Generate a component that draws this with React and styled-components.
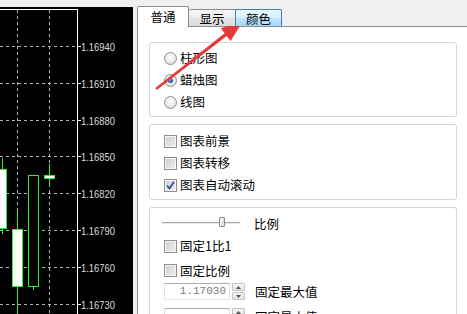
import React from "react";
import styled, { createGlobalStyle } from "styled-components";

const GlobalStyle = createGlobalStyle`
  html, body { margin: 0; padding: 0; background: #f0f0f0; overflow: hidden; }
  body {
    font-family: "Noto Sans CJK SC", "Microsoft YaHei", sans-serif;
    font-size: 12px;
    color: #000;
  }
`;

const Page = styled.div`
  position: relative;
  display: flex;
  width: 467px;
  height: 314px;
  overflow: hidden;
  background: #f0f0f0;
`;

const ChartPane = styled.div`
  flex: 0 0 133px;
  margin-top: 7px;
  background: #000;
  svg { display: block; }
`;

const Dialog = styled.div`
  flex: 1;
  min-width: 0;
  margin-left: 4px;
  display: flex;
  flex-direction: column;
`;

const TabBar = styled.div`
  position: relative;
  z-index: 1;
  flex-shrink: 0;
  display: flex;
  align-items: flex-end;
  height: 26px;
`;

const Tab = styled.div`
  box-sizing: border-box;
  display: flex;
  align-items: center;
  justify-content: center;
  width: ${(p) => p.$w}px;
  height: ${(p) => (p.$active ? 21 : 17)}px;
  margin-bottom: ${(p) => (p.$active ? -1 : 0)}px;
  margin-left: ${(p) => (p.$overlap ? -1 : 0)}px;
  padding-top: ${(p) => (p.$active ? 0 : 1)}px;
  border: 1px solid ${(p) => (p.$hover ? "#3c7fb1" : "#898c95")};
  border-bottom: none;
  border-left-style: ${(p) => (p.$noLeft ? "none" : "solid")};
  border-radius: 2px 2px 0 0;
  background: ${(p) =>
    p.$active
      ? "#fff"
      : p.$hover
      ? "linear-gradient(#eaf6fd, #d9f0fc 50%, #bee6fd 51%, #a7d9f5)"
      : "linear-gradient(#f6f6f6, #ececec 50%, #e3e3e3 51%, #dadada)"};
  line-height: 14px;
  font-size: 12.5px;
  white-space: nowrap;
`;

const TabPage = styled.div`
  flex: 1;
  min-height: 0;
  overflow: hidden;
  background: #fff;
  border-top: 1px solid #898c95;
  border-left: 1px solid #898c95;
  padding: 15px 0 0 11px;
  display: flex;
  flex-direction: column;
  gap: 7px;
`;

const Group = styled.div`
  box-sizing: border-box;
  flex-shrink: 0;
  width: 308px;
  border: 1px solid #d5d5d5;
  border-radius: 3px;
  padding: ${(p) => p.$pt}px 0 ${(p) => p.$pb}px 14px;
  display: flex;
  flex-direction: column;
`;

const OptionRow = styled.div`
  display: flex;
  align-items: center;
  gap: 3px;
  height: ${(p) => p.$h || 22}px;
  white-space: nowrap;
  line-height: 14px;
  font-size: 12.5px;
`;

const Radio = styled.span`
  box-sizing: border-box;
  flex-shrink: 0;
  width: 13px;
  height: 13px;
  border-radius: 50%;
  border: 1px solid #8e8f8f;
  background: radial-gradient(circle at 50% 40%, #ffffff 0%, #f2f2f2 35%, #d2d2d2 100%);
  display: flex;
  align-items: center;
  justify-content: center;
  &::after {
    content: "";
    display: ${(p) => (p.$checked ? "block" : "none")};
    width: 5px;
    height: 5px;
    border-radius: 50%;
    background: radial-gradient(circle at 40% 35%, #7cc4f2 0%, #2a6db0 45%, #123e70 100%);
  }
`;

const Check = styled.span`
  box-sizing: border-box;
  flex-shrink: 0;
  width: 13px;
  height: 13px;
  border: 1px solid #8f8f8f;
  background: linear-gradient(135deg, #cdcdcd, #efefef);
  box-shadow: inset 0 0 0 1px #f6f6f6;
  display: flex;
  align-items: center;
  justify-content: center;
  svg { display: block; }
`;

const SliderRow = styled.div`
  display: flex;
  align-items: center;
  height: 22px;
  margin-left: -2px;
  font-size: 12.5px;
`;

const Track = styled.div`
  position: relative;
  width: 78px;
  height: 1px;
  background: #a8a8a8;
  border-bottom: 1px solid #e8e8e8;
  margin-right: 14px;
`;

const Thumb = styled.div`
  position: absolute;
  left: 57px;
  top: -5px;
  box-sizing: border-box;
  width: 6px;
  height: 10px;
  border: 1px solid #8d8d8d;
  border-radius: 1px;
  background: linear-gradient(90deg, #f8f8f8, #dcdcdc);
`;

const SpinRow = styled.div`
  flex-shrink: 0;
  display: flex;
  align-items: center;
  height: 17px;
  margin-top: ${(p) => p.$mt || 0}px;
  white-space: nowrap;
  line-height: 14px;
  font-size: 12.5px;
`;

const SpinInput = styled.div`
  box-sizing: border-box;
  width: 66px;
  height: 17px;
  border: 1px solid #abadb3;
  border-color: #abadb3 #dbdfe6 #e3e9ef #e2e3ea;
  padding-right: 3px;
  text-align: right;
  color: #7a7a7a;
  font-family: "Liberation Mono", monospace;
  font-size: 11px;
  line-height: 15px;
  letter-spacing: 0;
`;

const SpinButtons = styled.div`
  box-sizing: border-box;
  width: 13px;
  height: 17px;
  margin-left: 2px;
  margin-right: 10px;
  display: flex;
  flex-direction: column;
  gap: 1px;
`;

const SpinBtn = styled.div`
  flex: 1;
  border: 1px solid #c4c4c4;
  border-radius: 1px;
  background: linear-gradient(#f6f6f6, #e2e2e2);
  display: flex;
  align-items: center;
  justify-content: center;
  svg { display: block; }
`;

const Overlay = styled.svg`
  position: absolute;
  left: 150px;
  top: 15px;
  pointer-events: none;
`;

const GREEN = "#35ec35";
const GRID_Y = [46.5, 83.5, 120.5, 156.5, 193.5, 230.5, 267.5, 304.5];
const PRICES = ["1.16940", "1.16910", "1.16880", "1.16850", "1.16820", "1.16790", "1.16760", "1.16730"];

function Chart() {
  return (
    <svg width="133" height="307" viewBox="0 7 133 307" shapeRendering="crispEdges">
      {GRID_Y.map((y) => (
        <line key={"h" + y} x1="0" y1={y} x2="77" y2={y} stroke="#b4b4b4" strokeDasharray="3 3" />
      ))}
      {[17.5, 49.5].map((x) => (
        <line key={"v" + x} x1={x} y1="10" x2={x} y2="314" stroke="#b4b4b4" strokeDasharray="3 3" />
      ))}
      <line x1="2.5" y1="158" x2="2.5" y2="234" stroke={GREEN} />
      <rect x="-1.5" y="169.5" width="8" height="59" fill="#fff" stroke={GREEN} />
      <line x1="17.5" y1="210" x2="17.5" y2="314" stroke={GREEN} />
      <rect x="12.5" y="229.5" width="10" height="57" fill="#fff" stroke={GREEN} />
      <line x1="33.5" y1="286" x2="33.5" y2="290" stroke={GREEN} />
      <rect x="28.5" y="175.5" width="10" height="111" fill="#000" stroke={GREEN} />
      <line x1="49.5" y1="164" x2="49.5" y2="186" stroke={GREEN} />
      <rect x="44.5" y="175.5" width="10" height="3" fill="#fff" stroke={GREEN} />
      <line x1="0" y1="9.5" x2="77.5" y2="9.5" stroke="#fff" />
      <line x1="77.5" y1="9.5" x2="77.5" y2="314" stroke="#fff" />
      {GRID_Y.map((y, i) => (
        <g key={"t" + y}>
          <line x1="77" y1={y} x2="81" y2={y} stroke="#fff" />
          <text
            x="81"
            y={y + 4}
            fill="#dcdcdc"
            fontFamily="Liberation Sans, Arial, sans-serif"
            fontSize="11"
            textLength="34"
            lengthAdjust="spacingAndGlyphs"
            shapeRendering="auto"
          >
            {PRICES[i]}
          </text>
        </g>
      ))}
    </svg>
  );
}

function CheckMark() {
  return (
    <svg width="9" height="9" viewBox="0 0 9 9">
      <path d="M1 4.5 L3.5 7.5 L8 0.8" fill="none" stroke="#2c4a8c" strokeWidth="1.6" />
    </svg>
  );
}

function SpinArrows() {
  return (
    <SpinButtons>
      <SpinBtn>
        <svg width="5" height="3" viewBox="0 0 5 3"><path d="M0 3 L2.5 0 L5 3Z" fill="#555" /></svg>
      </SpinBtn>
      <SpinBtn>
        <svg width="5" height="3" viewBox="0 0 5 3"><path d="M0 0 L2.5 3 L5 0Z" fill="#555" /></svg>
      </SpinBtn>
    </SpinButtons>
  );
}

function Arrow() {
  return (
    <Overlay width="100" height="80" viewBox="150 15 100 80">
      <polygon
        points="155.3,88.1 224.7,33.3 220.8,28.3 243,21 230.6,40.9 226.7,35.9 156.7,89.9"
        fill="#e8393a"
      />
    </Overlay>
  );
}

export default function App() {
  return (
    <Page>
      <GlobalStyle />
      <ChartPane>
        <Chart />
      </ChartPane>
      <Dialog>
        <TabBar>
          <Tab $active $w={52}>普通</Tab>
          <Tab $w={47} $noLeft>显示</Tab>
          <Tab $w={47} $hover $overlap>颜色</Tab>
        </TabBar>
        <TabPage>
          <Group $pt={4} $pb={3}>
            <OptionRow><Radio />柱形图</OptionRow>
            <OptionRow><Radio $checked />蜡烛图</OptionRow>
            <OptionRow><Radio />线图</OptionRow>
          </Group>
          <Group $pt={5} $pb={3}>
            <OptionRow><Check />图表前景</OptionRow>
            <OptionRow><Check />图表转移</OptionRow>
            <OptionRow><Check><CheckMark /></Check>图表自动滚动</OptionRow>
          </Group>
          <Group $pt={4} $pb={4}>
            <SliderRow>
              <Track><Thumb /></Track>
              比例
            </SliderRow>
            <OptionRow $h={24}><Check />固定1比1</OptionRow>
            <OptionRow $h={25}><Check />固定比例</OptionRow>
            <SpinRow>
              <SpinInput>1.17030</SpinInput>
              <SpinArrows />
              固定最大值
            </SpinRow>
            <SpinRow $mt={8}>
              <SpinInput></SpinInput>
              <SpinArrows />
              固定最小值
            </SpinRow>
          </Group>
        </TabPage>
      </Dialog>
      <Arrow />
    </Page>
  );
}
